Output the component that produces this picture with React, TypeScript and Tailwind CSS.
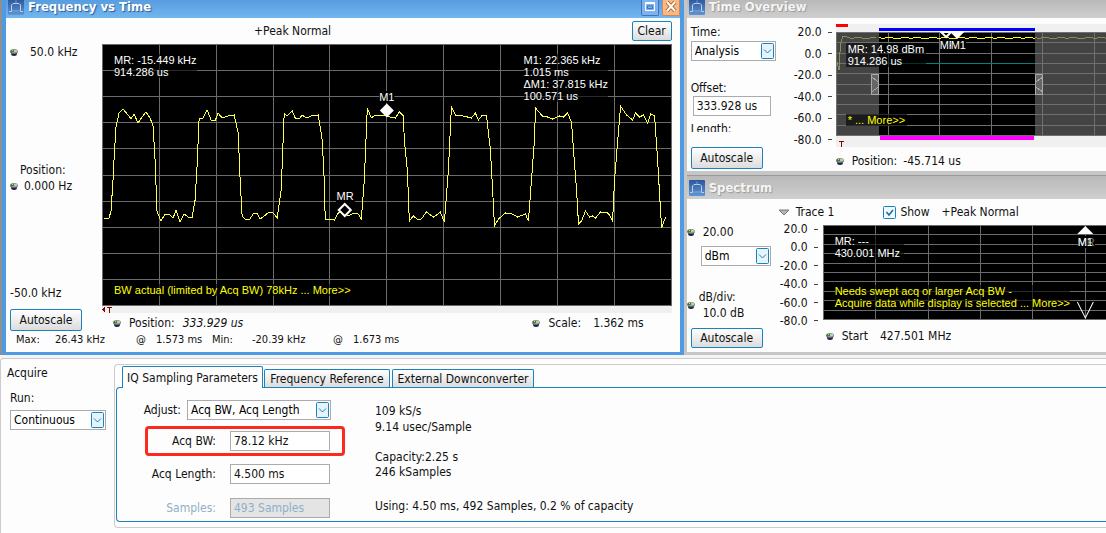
import type { ReactNode } from "react";

const TRACE: [number, number][] = [
  [104, 218], [109, 218], [111, 211], [113, 180], [114, 160], [116, 127], [119, 113], [123, 109], [128, 115], [131, 119],
  [134, 114], [138, 123], [142, 117], [146, 112], [150, 118], [153, 126], [155, 160], [157, 212], [161, 221], [165, 214],
  [169, 214], [173, 218], [176, 210], [180, 222], [184, 214], [188, 217], [192, 217], [195, 200], [197, 165], [199, 119],
  [203, 118], [207, 110], [211, 120], [215, 121], [218, 113], [222, 118], [228, 116], [234, 115], [238, 133], [240, 180],
  [242, 216], [245, 219], [249, 220], [253, 214], [257, 213], [260, 219], [264, 216], [269, 212], [273, 213], [277, 218],
  [281, 190], [284, 113], [287, 116], [292, 111], [295, 118], [299, 119], [302, 115], [306, 118], [311, 116], [318, 115],
  [322, 140], [324, 180], [325, 220], [330, 219], [334, 220], [338, 213], [342, 211], [348, 216], [352, 214], [356, 213],
  [358, 214], [361, 219], [364, 180], [367, 108], [371, 118], [375, 115], [382, 115], [390, 117], [395, 118], [399, 112],
  [403, 116], [404, 140], [407, 170], [409, 221], [413, 216], [418, 220], [421, 219], [426, 212], [430, 215], [433, 217],
  [436, 215], [440, 212], [444, 222], [448, 170], [451, 107], [455, 115], [463, 116], [471, 118], [475, 113], [478, 120],
  [482, 115], [486, 115], [490, 150], [493, 205], [494, 226], [498, 219], [505, 213], [512, 214], [517, 217], [525, 214],
  [528, 221], [531, 180], [534, 140], [535, 108], [542, 116], [547, 117], [552, 119], [559, 116], [563, 117], [567, 113],
  [571, 122], [573, 150], [576, 190], [578, 224], [581, 221], [585, 211], [589, 217], [592, 216], [595, 218], [600, 212],
  [607, 213], [609, 215], [612, 221], [614, 180], [618, 130], [620, 106], [626, 115], [632, 120], [635, 113], [639, 117],
  [643, 115], [647, 123], [650, 114], [654, 116], [657, 160], [659, 195], [661, 228], [665, 217],
];

// power level line of the overview, one step every 4 units
function levelLine(from: number, to: number) {
  const pts = [];
  for (let x = from, i = 0; x <= to; x += 4, i++) pts.push(`${x},${[13, 14, 13, 13, 14, 14, 13][i % 7]}.5`);
  return pts.join(" ");
}

function range(n: number) {
  return Array.from({ length: n }, (_, i) => i);
}

function AppIcon() {
  return (
    <svg width="16" height="16" viewBox="0 0 16 16" className="shrink-0">
      <defs>
        <linearGradient id="ico" x1="0" y1="0" x2="0" y2="1">
          <stop offset="0" stopColor="#2c569c" />
          <stop offset="1" stopColor="#5f95d3" />
        </linearGradient>
      </defs>
      <rect width="16" height="16" rx="1" fill="url(#ico)" />
      <path d="M1 12.500h2.500V6l1.500-1.500h6L12.500 6v6.500H15" fill="none" stroke="#b9d0ee" />
      <path d="M8 1.500v3M3.500 12h9" stroke="#7fa6d8" />
    </svg>
  );
}

function Knob() {
  return (
    <svg width="8" height="7" viewBox="0 0 8 7" className="shrink-0">
      <ellipse cx="4" cy="4.500" rx="3" ry="2.500" fill="#1b1f5a" />
      <ellipse cx="4" cy="2.500" rx="4" ry="2.500" fill="#6f756f" />
      <ellipse cx="4.500" cy="2" rx="3" ry="1.500" fill="#c3c7c3" />
      <path d="M1 1h3v2H1z" fill="#2f8a1a" />
      <path d="M2 1h1v1H2z" fill="#e8e04a" />
    </svg>
  );
}

function Btn({ children, className = "" }: { children: ReactNode; className?: string }) {
  return (
    <button
      type="button"
      className={`shrink-0 rounded-xs border border-[#1a82bd] bg-linear-to-b from-white to-[#dcdcdc] text-center ${className}`}
    >
      {children}
    </button>
  );
}

function Select({ label, options, className = "" }: { label: string; options: string[]; className?: string }) {
  return (
    <div className={`relative ${className}`}>
      <select
        aria-label={label}
        className="block h-5 w-full appearance-none border border-[#ababab] bg-white pl-[3px] text-black"
      >
        {options.map((o) => (
          <option key={o}>{o}</option>
        ))}
      </select>
      <svg width="13" height="16" viewBox="0 0 13 16" className="pointer-events-none absolute top-0.5 right-0.5">
        <rect x="0.5" y="0.5" width="12" height="15" rx="1" fill="#e6f3fa" stroke="#1a82bd" />
        <path d="M3 6.500l3.500 3.500L10 6.500" fill="none" stroke="#1a82bd" />
      </svg>
    </div>
  );
}

function Axis({ values, className }: { values: string[]; className: string }) {
  return (
    <div className={`flex shrink-0 flex-col justify-between ${className}`}>
      {values.map((v) => (
        <div key={v} className="flex h-4 items-center justify-end gap-1.5">
          <span>{v}</span>
          <span className="h-px w-1 bg-[#444]" />
        </div>
      ))}
    </div>
  );
}

function Field({ id, label, value, disabled = false }: { id: string; label: string; value: string; disabled?: boolean }) {
  return (
    <div className={`flex items-center justify-end ${disabled ? "text-[#8fb0c8]" : ""}`}>
      <label htmlFor={id}>{label}</label>
      <input
        id={id}
        defaultValue={value}
        disabled={disabled}
        className="ml-3.5 h-5 w-[100px] border border-[#ababab] bg-white px-[3px] disabled:bg-[#e4e4e4]"
      />
    </div>
  );
}

function FrequencyPanel() {
  return (
    <section className="flex min-w-0 flex-[681] flex-col border-l-2 border-[#8f8f8f]">
      <div className="flex flex-1 flex-col border-x-4 border-b-3 border-[#4f9be3] bg-[#fdfdfd]">
        <header className="flex h-[18px] items-start bg-linear-to-b from-[#579de0] to-[#73b6ef] pl-0.5">
          <div className="flex h-3.5 items-center gap-1">
            <AppIcon />
            <h2 className="text-[13px] font-bold text-white [text-shadow:1px_1px_1px_#2a5a92]">Frequency vs Time</h2>
          </div>
          <div className="ml-auto flex gap-[3px]">
            <button type="button" aria-label="Restore" className="h-4 w-[18px] rounded-b-xs border border-t-0 border-[#3c74c0] bg-[#7fb2ec]">
              <svg width="16" height="15" viewBox="0 0 16 15" fill="none" stroke="#fff">
                <path d="M3.500 2.500h9v8h-9zM3 3.500h10" />
                <path d="M5.500 6h5v2.500h-5z" stroke="#3c74c0" />
              </svg>
            </button>
            <button type="button" aria-label="Close" className="h-4 w-[18px] rounded-b-xs border border-t-0 border-[#c98a5c] bg-[#fab983]">
              <svg width="16" height="15" viewBox="0 0 16 15" fill="none">
                <path d="M4 2l8 9M12 2l-8 9" stroke="#b0622c" strokeWidth="4" />
                <path d="M4 2l8 9M12 2l-8 9" stroke="#fff" strokeWidth="2" />
              </svg>
            </button>
          </div>
        </header>

        <div className="flex h-[26px] items-center pr-2 pl-[248px]">
          <span>+Peak Normal</span>
          <Btn className="ml-auto h-5 w-10">Clear</Btn>
        </div>

        <div className="flex pr-2">
          <div className="flex w-24 shrink-0 flex-col pl-1">
            <div className="flex h-4 items-center gap-3">
              <Knob />
              <span>50.0 kHz</span>
            </div>
            <div className="mt-[102px] pl-2.5">Position:</div>
            <div className="flex h-4 items-center gap-1.5">
              <Knob />
              <span>0.000 Hz</span>
            </div>
            <div className="mt-[91px]">-50.0 kHz</div>
            <Btn className="mt-2 h-[22px] w-[72px]">Autoscale</Btn>
          </div>

          <div className="min-w-0 flex-1">
            <div className="relative h-[262px] bg-black font-['Liberation_Sans',Arial,sans-serif] text-[11px] leading-3 text-white">
              <svg viewBox="102 44 569 262" preserveAspectRatio="none" className="block h-full w-full">
                <g stroke="#6b6b6b" shapeRendering="crispEdges">
                  {range(11).map((i) => (
                    <path key={i} d={`M${102.5 + i * 56.8} 44V306`} />
                  ))}
                  {range(11).map((i) => (
                    <path key={i} d={`M102 ${44.5 + i * 26.1}H671`} />
                  ))}
                </g>
                <polyline
                  points={TRACE.map((p) => p.join(",")).join(" ")}
                  fill="none"
                  stroke="#ffff4a"
                  shapeRendering="crispEdges"
                />
                <path d="M386.500 103.500l7 7-7 7-7-7z" fill="#fff" />
                <path d="M344.500 204l6 6-6 6-6-6z" fill="#000" stroke="#fff" strokeWidth="2" />
              </svg>
              <div className="absolute top-2.5 left-3 bg-black/60">MR: -15.449 kHz<br />914.286 us</div>
              <div className="absolute top-2.5 left-[74%] bg-black/60 whitespace-nowrap">
                M1: 22.365 kHz<br />1.015 ms<br />ΔM1: 37.815 kHz<br />100.571 us
              </div>
              <div className="absolute top-[47px] left-1/2 -translate-x-1/2 bg-black">M1</div>
              <div className="absolute top-[146px] left-[41%] bg-black px-px">MR</div>
              <div className="absolute bottom-2.5 left-3 bg-black/60 text-[#ffff00]">BW actual (limited by Acq BW) 78kHz ... More&gt;&gt;</div>
            </div>
            <div className="flex h-[7px] items-center bg-[#f0f0f0]">
              <svg width="10" height="7" viewBox="0 0 10 7" shapeRendering="crispEdges">
                <path d="M3 1v5L0 3.500z" fill="#8b0000" />
                <path d="M5 1.500h5M7.500 1v6" stroke="#8b0000" />
              </svg>
            </div>
            <div className="flex h-5 items-center pr-7 pl-[11px]">
              <Knob />
              <span className="ml-2">Position:</span>
              <span className="ml-2 italic">333.929 us</span>
              <span className="ml-auto"><Knob /></span>
              <span className="ml-2">Scale:</span>
              <span className="ml-3">1.362 ms</span>
            </div>
          </div>
        </div>

        <div className="flex h-3.5 items-center pl-2.5 text-[11px]">
          <span className="w-[39px]">Max:</span>
          <span className="w-[81px]">26.43 kHz</span>
          <span className="w-5">@</span>
          <span className="w-14">1.573 ms</span>
          <span className="w-10">Min:</span>
          <span className="w-[81px]">-20.39 kHz</span>
          <span className="w-5">@</span>
          <span>1.673 ms</span>
        </div>
      </div>
    </section>
  );
}

function PanelTitle({ title, className }: { title: string; className: string }) {
  return (
    <header className={`flex items-center gap-1 bg-linear-to-b from-[#b9b9b9] to-[#cfcfcf] pl-0.5 ${className}`}>
      <AppIcon />
      <h2 className="text-[13px] font-bold text-[#f4f4f4] [text-shadow:1px_1px_1px_#999]">{title}</h2>
    </header>
  );
}

function TimeOverview() {
  return (
    <section className="flex h-[175px] flex-col overflow-hidden border-b-4 border-l-3 border-[#c6c6c6] bg-[#fdfdfd]">
      <PanelTitle title="Time Overview" className="h-[18px] pb-1" />
      <div className="flex min-h-0 flex-1">
        <div className="flex w-[106px] shrink-0 flex-col pt-1.5 pl-1">
          <span className="h-4">Time:</span>
          <Select label="Time" options={["Analysis", "Spectrum"]} className="mt-px w-[85px]" />
          <label htmlFor="offset" className="mt-[19px] h-4">Offset:</label>
          <input id="offset" defaultValue="333.928 us" className="ml-0.5 h-5 w-[78px] border border-[#ababab] bg-white px-[3px]" />
          {/* the next control is scrolled out of the panel, only the top of its label shows */}
          <span className="mt-1 h-3 overflow-hidden leading-[18px]">Length:</span>
          <Btn className="mt-[15px] h-[22px] w-[72px]">Autoscale</Btn>
        </div>
        <Axis values={["20.0", "0.0", "-20.0", "-40.0", "-60.0", "-80.0"]} className="mt-1.5 mr-1 h-[124px] w-[39px]" />
        <div className="min-w-0 flex-1">
          <div className="relative mt-1.5 h-[123px] bg-[#f0f0f0] font-['Liberation_Sans',Arial,sans-serif] text-[11px] leading-3 text-white">
            <svg viewBox="0 0 270 123" preserveAspectRatio="none" className="block h-full w-full" shapeRendering="crispEdges">
              <rect y="8" width="270" height="104" fill="#444" />
              <rect x="43" y="8" width="156" height="104" fill="#000" />
              <g stroke="#707070">
                {range(6).map((i) => (
                  <path key={i} d={`M${0.5 + i * 51.5} 8V112`} />
                ))}
                {range(11).map((i) => (
                  <path key={i} d={`M0 ${8.5 + i * 10.3}H270`} />
                ))}
              </g>
              <path d="M43 39.500h156" stroke="#008080" />
              <path d="M0 0h12v3H0z" fill="#f00" />
              <path d="M43 4h156v3H43z" fill="#00f" />
              <path d="M44 112h154v4H44z" fill="#f0f" />
              <polyline points={`1,38 3,46 4,28 5,18 7,12 11,13 ${levelLine(12, 43)}`} fill="none" stroke="#8f8b52" />
              <polyline points={levelLine(43, 199)} fill="none" stroke="#ffff00" />
              <polyline points={levelLine(199, 271)} fill="none" stroke="#8f8b52" />
              <g fill="#666" stroke="#aaa">
                <path d="M35.500 50.500h7v20h-7zM35.500 53l7 5M35.500 68l7-5" />
                <path d="M199.500 50.500h7v20h-7zM206.500 53l-7 5M206.500 68l-7-5" />
              </g>
              <g shapeRendering="auto">
                <path d="M105 8h10l-5 5z" fill="#000" stroke="#fff" strokeWidth="2" />
                <path d="M113 7h16l-8 8z" fill="#fff" />
              </g>
              <path d="M3 117.500h5M5.500 117v6" stroke="#8b0000" />
            </svg>
            <div className="absolute top-[19px] left-2.5 bg-black/60 px-0.5">MR: 14.98 dBm<br />914.286 us</div>
            <div className="absolute top-[15px] left-[104px] bg-black">MR</div>
            <div className="absolute top-[15px] left-[115px] bg-black">M1</div>
            <div className="absolute top-[90px] left-2.5 bg-black/60 px-0.5 text-[#ffff00]">* ... More&gt;&gt;</div>
          </div>
          <div className="mt-1.5 flex h-4 items-center">
            <Knob />
            <span className="ml-2">Position:</span>
            <span className="ml-1.5">-45.714 us</span>
          </div>
        </div>
      </div>
    </section>
  );
}

function Spectrum() {
  return (
    <section className="flex h-[180px] flex-col border-b-3 border-l-3 border-[#c6c6c6] bg-[#fdfdfd]">
      <div className="border-t border-[#999]">
        <PanelTitle title="Spectrum" className="h-[23px]" />
      </div>
      <div className="flex flex-1">
        <div className="flex w-[91px] shrink-0 flex-col">
          <div className="mt-[25px] flex h-4 items-center gap-2">
            <Knob />
            <span>20.00</span>
          </div>
          <Select label="Unit" options={["dBm", "dBV"]} className="mt-1.5 ml-3.5 w-[70px]" />
          <div className="mt-[23px] flex items-center gap-1">
            <Knob />
            <div className="leading-4">
              dB/div:
              <div className="pl-1">10.0 dB</div>
            </div>
          </div>
          <Btn className="mt-[7px] ml-1 h-5 w-[72px]">Autoscale</Btn>
        </div>
        <div className="min-w-0 flex-1">
          <div className="flex h-[26px] items-center">
            <svg width="12" height="7" viewBox="0 0 12 7">
              <path d="M1 1h10L6 6z" fill="#b5b5b5" stroke="#777" />
            </svg>
            <span className="ml-1.5">Trace 1</span>
            <label className="ml-[49px] flex items-center gap-1">
              <input type="checkbox" defaultChecked className="peer sr-only" />
              <svg width="13" height="13" viewBox="0 0 13 13">
                <rect x="0.5" y="0.5" width="12" height="12" rx="1" fill="#f2f9fd" stroke="#1a82bd" />
                <path d="M3.500 6l2.500 3 4-5" fill="none" stroke="#1a6aa5" strokeWidth="1.500" />
              </svg>
              Show
            </label>
            <span className="ml-3">+Peak Normal</span>
          </div>
          <div className="flex">
            <Axis values={["20.0", "0.0", "-20.0", "-40.0", "-60.0", "-80.0"]} className="-mt-1 mr-[5px] h-[108px] w-10" />
            <div className="min-w-0 flex-1">
              <div className="relative h-[95px] bg-black font-['Liberation_Sans',Arial,sans-serif] text-[11px] leading-3 text-white">
                <svg viewBox="0 0 283 95" preserveAspectRatio="none" className="block h-full w-full">
                  <g stroke="#6b6b6b" shapeRendering="crispEdges">
                    {range(6).map((i) => (
                      <path key={i} d={`M${0.5 + i * 52.3} 0V95`} />
                    ))}
                    {range(11).map((i) => (
                      <path key={i} d={`M0 ${0.5 + i * 9.4}H283`} />
                    ))}
                  </g>
                  <path d="M262 1l8 8h-16z" fill="#fff" />
                  <path d="M254 77l8 16 8-16" fill="none" stroke="#fff" />
                </svg>
                <div className="absolute top-2.5 left-3 bg-black/60 pr-1">MR: ---<br />430.001 MHz</div>
                <div className="absolute top-[11px] left-[255px] bg-black text-[#777]">MR</div>
                <div className="absolute top-[11px] left-[255px]">M1</div>
                <div className="absolute top-[60px] left-3 bg-black/60 whitespace-nowrap text-[#ffff00]">
                  Needs swept acq or larger Acq BW -<br />Acquire data while display is selected ... More&gt;&gt;
                </div>
              </div>
              <div className="mt-2 flex h-4 items-center pl-[3px]">
                <Knob />
                <span className="ml-2">Start</span>
                <span className="ml-3">427.501 MHz</span>
              </div>
            </div>
          </div>
        </div>
      </div>
    </section>
  );
}

function AcquirePanel() {
  return (
    <section className="mt-[3px] flex flex-1 rounded-tl border-t border-l border-[#ccc] bg-[#fdfdfd]">
      <div className="w-[113px] shrink-0 px-1.5 pt-1.5">
        <h2 className="h-4">Acquire</h2>
        <div className="mt-[9px] h-4 pl-[3px]">Run:</div>
        <Select label="Run" options={["Continuous", "Single"]} className="mt-1 ml-[3px] w-24" />
      </div>

      <div className="mt-[5px] mb-1.5 min-w-0 flex-1 rounded-l border border-r-0 border-[#ccc] pt-px pb-[5px] pl-px">
        <div role="tablist" className="flex items-end pl-1.5">
          <button type="button" role="tab" aria-selected="true" className="relative z-10 -mb-px h-[22px] w-[141px] rounded-t-xs border border-b-0 border-[#1a82bd] bg-[#fdfdfd]">
            IQ Sampling Parameters
          </button>
          <button type="button" role="tab" aria-selected="false" className="ml-px h-[18px] w-[126px] rounded-t-xs border border-b-0 border-[#1a82bd] bg-linear-to-b from-white to-[#dcdcdc]">
            Frequency Reference
          </button>
          <button type="button" role="tab" aria-selected="false" className="ml-0.5 h-[18px] w-[142px] rounded-t-xs border border-b-0 border-[#1a82bd] bg-linear-to-b from-white to-[#dcdcdc]">
            External Downconverter
          </button>
        </div>
        <div className="flex h-[135px] rounded-l border border-r-0 border-[#1a82bd]">
          <div className="w-[228px] shrink-0 pt-3">
            <div className="flex items-center justify-end pr-3.5">
              <span className="mr-1.5">Adjust:</span>
              <Select label="Adjust" options={["Acq BW, Acq Length", "Acq BW, Samples"]} className="w-36" />
            </div>
            <div className="mt-1.5 ml-7 h-[30px] rounded border-3 border-[#fb2a1c] pt-0.5 pr-3">
              <Field id="acq-bw" label="Acq BW:" value="78.12 kHz" />
            </div>
            <div className="mt-2 flex flex-col gap-3.5 pr-[15px]">
              <Field id="acq-length" label="Acq Length:" value="4.500 ms" />
              <Field id="samples" label="Samples:" value="493 Samples" disabled />
            </div>
          </div>
          <div className="pt-[15px] pl-[30px] leading-4">
            <p>109 kS/s<br />9.14 usec/Sample</p>
            <p className="mt-[15px] leading-[15px]">Capacity:2.25 s<br />246 kSamples</p>
            <p className="mt-[18px]">Using: 4.50 ms, 492 Samples, 0.2 % of capacity</p>
          </div>
        </div>
      </div>
    </section>
  );
}

export default function App() {
  return (
    <main className="flex min-h-screen flex-col bg-[#f4f4f4] font-['DejaVu_Sans_Condensed','DejaVu_Sans',Tahoma,sans-serif] text-[12px] leading-4 text-[#111]">
      <div className="flex">
        <FrequencyPanel />
        <div className="min-w-0 flex-[422]">
          <TimeOverview />
          <Spectrum />
        </div>
      </div>
      <AcquirePanel />
    </main>
  );
}
